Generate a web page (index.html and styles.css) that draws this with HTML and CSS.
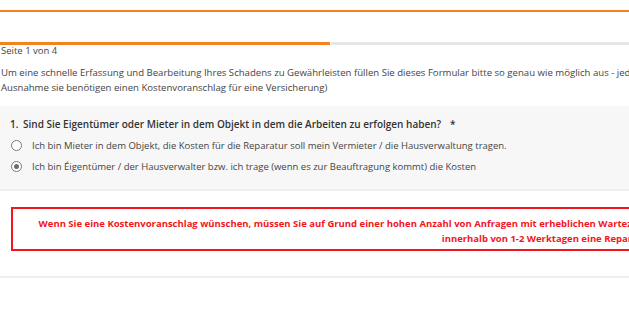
FILE: index.html
```html
<!DOCTYPE html>
<html lang="de">
<head>
<meta charset="utf-8">
<title>Formular</title>
<link rel="stylesheet" href="styles.css">
</head>
<body>
<div class="page">
  <div class="topbar"></div>
  <div class="progress"><div class="progress-fill"></div></div>
  <div class="pageinfo">Seite 1 von 4</div>
  <p class="intro">Um eine schnelle Erfassung und Bearbeitung Ihres Schadens zu Gewährleisten füllen Sie dieses Formular bitte so genau wie möglich aus - jedes Feld ist ein Pflichtfeld (mit einer<br>Ausnahme sie benötigen einen Kostenvoranschlag für eine Versicherung)</p>
  <div class="panel">
    <div class="question"><span class="qnum">1.</span><span class="qtext">Sind Sie Eigentümer oder Mieter in dem Objekt in dem die Arbeiten zu erfolgen haben?</span><span class="req">*</span></div>
    <label class="option"><span class="radio"></span><span>Ich bin Mieter in dem Objekt, die Kosten für die Reparatur soll mein Vermieter / die Hausverwaltung tragen.</span></label>
    <label class="option"><span class="radio checked"></span><span>Ich bin Éigentümer / der Hausverwalter bzw. ich trage (wenn es zur Beauftragung kommt) die Kosten</span></label>
  </div>
  <div class="notice">
    <span class="nline">Wenn Sie eine Kostenvoranschlag wünschen, müssen Sie auf Grund einer hohen Anzahl von Anfragen mit erheblichen Wartezeiten rechnen. Sollten Sie keinen Kostenvoranschlag benötigen, können wir Ihnen in der Regel auch</span>
    <span class="nline">innerhalb von 1-2 Werktagen eine Reparatur anbieten.</span>
  </div>
  <div class="footline"></div>
</div>
</body>
</html>
```
FILE: styles.css
```css
html, body {
  margin: 0;
  padding: 0;
  background: #ffffff;
}
body {
  width: 629px;
  height: 315px;
  overflow: hidden;
  font-family: "Open Sans", "Noto Sans", sans-serif;
  font-size: 9.5px;
  color: #444444;
}
.page {
  width: 1400px;
}
.topbar {
  height: 10px;
  border-bottom: 2px solid #f5821f;
}
.progress {
  margin-top: 30px;
  height: 3px;
  background: #e6e6e6;
  width: 1400px;
}
.progress-fill {
  width: 330px;
  height: 3px;
  background: #f5821f;
  border-right: 1px solid #ffffff;
}
.pageinfo {
  padding-left: 1px;
  line-height: 12px;
}
.intro {
  margin: 8px 0 0 0;
  padding-left: 1px;
  font-size: 9.6px;
  line-height: 15px;
  white-space: nowrap;
}
.panel {
  margin-top: 11px;
  background: #f7f7f7;
  border-bottom: 2px solid #eeeeee;
  padding: 11px 0 12px 10px;
}
.question {
  font-weight: 600;
  font-size: 10px;
  line-height: 14px;
  color: #333333;
  display: flex;
  margin-bottom: 4px;
}
.qnum {
  width: 13px;
}
.req {
  margin-left: 9px;
}
.option {
  display: flex;
  align-items: center;
  height: 21px;
  white-space: nowrap;
}
.radio {
  width: 9px;
  height: 9px;
  border: 1px solid #7a7a7a;
  border-radius: 50%;
  background: #ffffff;
  margin-left: 1px;
  margin-right: 10px;
  display: flex;
  align-items: center;
  justify-content: center;
  flex: none;
}
.radio.checked::after {
  content: "";
  width: 5px;
  height: 5px;
  border-radius: 50%;
  background: #6e6e6e;
}
.notice {
  margin: 16px 0 0 11px;
  width: 1116px;
  border: 2px solid #f3151d;
  padding: 7px 0 3px 0;
  text-align: center;
  color: #f3151d;
  font-weight: 700;
  font-size: 9.5px;
  line-height: 15px;
}
.nline {
  display: block;
  white-space: nowrap;
}
.footline {
  margin-top: 25px;
  height: 2px;
  background: #efefef;
}
```
